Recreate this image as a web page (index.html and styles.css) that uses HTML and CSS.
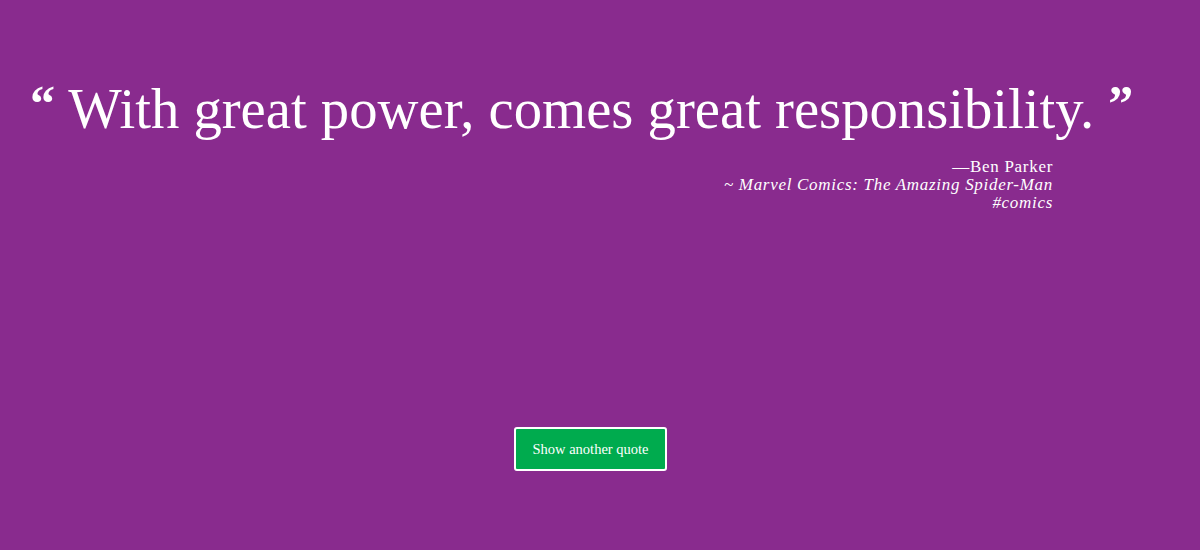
FILE: index.html
```html
<!DOCTYPE html>
<html>
<head>
<meta charset="utf-8">
<link rel="stylesheet" href="styles.css">
</head>
<body>
<main class="page">
  <section class="quote-box">
    <h1 class="quote"><span class="mark">&ldquo;</span> With great power, comes great responsibility. <span class="mark">&rdquo;</span></h1>
    <div class="attribution">
      <div class="author">&mdash;Ben Parker</div>
      <div class="source">~ Marvel Comics: The Amazing Spider-Man</div>
      <div class="tag">#comics</div>
    </div>
  </section>
  <div class="actions">
    <button class="next-btn">Show another quote</button>
  </div>
</main>
</body>
</html>
```
FILE: styles.css
```css
html, body {
  margin: 0;
  padding: 0;
  height: 100%;
}
body {
  background: #892b8e;
  color: #fff;
  font-family: "Liberation Serif", "DejaVu Serif", serif;
}
.page {
  display: flex;
  flex-direction: column;
  height: 550px;
}
.quote-box {
  padding: 70px 0 0 30px;
  width: 1110px;
}
.quote {
  margin: 0;
  font-weight: normal;
  font-size: 56.7px;
  line-height: 66px;
  white-space: nowrap;
}
.mark {
  font-size: 50px;
  font-weight: bold;
  vertical-align: 8px;
}
.attribution {
  width: 1023px;
  text-align: right;
  font-size: 17px;
  line-height: 18px;
  letter-spacing: 0.7px;
  margin-top: 16px;
}
.source, .tag {
  font-style: italic;
}
.actions {
  display: flex;
  justify-content: flex-start;
  padding: 215px 0 0 514px;
}
.next-btn {
  font-family: "Liberation Serif", serif;
  font-size: 14.5px;
  color: #fff;
  background: #00ab4e;
  border: 2px solid #fff;
  border-radius: 3px;
  width: 153px;
  height: 44px;
  padding: 0;
}
```
